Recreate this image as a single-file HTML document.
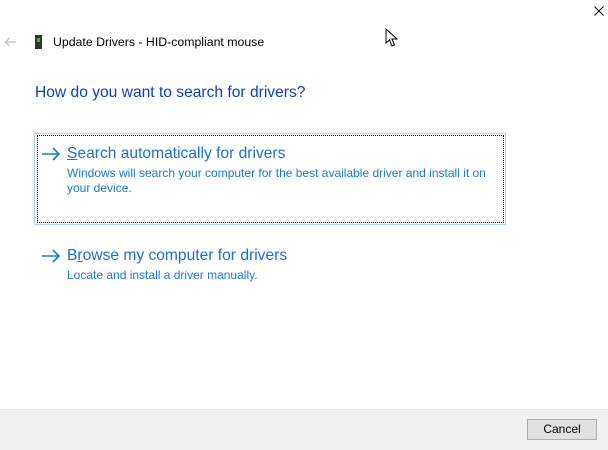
<!DOCTYPE html>
<html><head><style>
body{margin:0;width:608px;height:449px;background:#fff;position:relative;overflow:hidden;font-family:"Liberation Sans",sans-serif}
.a{position:absolute;white-space:nowrap}
</style></head><body>
<svg class="a" style="left:594px;top:6px" width="10" height="10"><path d="M0.5 0.5L9.5 9.5M9.5 0.5L0.5 9.5" stroke="#000" stroke-width="1"/></svg>
<svg class="a" style="left:385px;top:28px" width="14" height="20"><path d="M1 1L1 15L4.5 12L7 18L9.5 17L7 11L12 11Z" fill="#fff" stroke="#000" stroke-width="1"/></svg>
<svg class="a" style="left:4px;top:37px" width="13" height="10"><path d="M12 5H1.5M5.5 1L1.5 5L5.5 9" stroke="#bbb" stroke-width="1.2" fill="none"/></svg>
<div class="a" style="left:35px;top:35px;width:7px;height:14px;background:#333"></div>
<div class="a" style="left:37px;top:38px;width:3px;height:4px;background:#2c2"></div>
<div class="a" style="left:53px;top:35px;font-size:12.3px;color:#000">Update Drivers - HID-compliant mouse</div>
<div class="a" style="left:35px;top:84px;font-size:15.6px;color:#0a3fbf">How do you want to search for drivers?</div>
<div class="a" style="left:34px;top:133px;width:470px;height:90px;border:1px solid #a8d2f5"></div>
<div class="a" style="left:37px;top:135px;width:465px;height:86px;border:1px dotted #000"></div>
<svg class="a" style="left:41px;top:147px" width="20" height="14"><path d="M1 7H18M12 1L18 7L12 13" stroke="#1a78d8" stroke-width="1.6" fill="none"/></svg>
<div class="a" style="left:67px;top:145px;font-size:15.6px;color:#1a6fd0"><u>S</u>earch automatically for drivers</div>
<div class="a" style="left:67px;top:166px;font-size:12px;color:#1a78d8;line-height:15px;white-space:normal;width:425px">Windows will search your computer for the best available driver and install it on your device.</div>
<svg class="a" style="left:41px;top:249px" width="20" height="14"><path d="M1 7H18M12 1L18 7L12 13" stroke="#1a78d8" stroke-width="1.6" fill="none"/></svg>
<div class="a" style="left:67px;top:247px;font-size:15.6px;color:#1a6fd0">B<u>r</u>owse my computer for drivers</div>
<div class="a" style="left:67px;top:268px;font-size:12px;color:#1a78d8">Locate and install a driver manually.</div>
<div class="a" style="left:0;top:409px;width:608px;height:40px;background:#f0f0f0;border-top:1px solid #e6e6e6"></div>
<div class="a" style="left:527px;top:419px;width:68px;height:19px;background:#e1e1e1;border:1px solid #adadad;font-size:12px;text-align:center;line-height:19px">Cancel</div>
</body></html>
